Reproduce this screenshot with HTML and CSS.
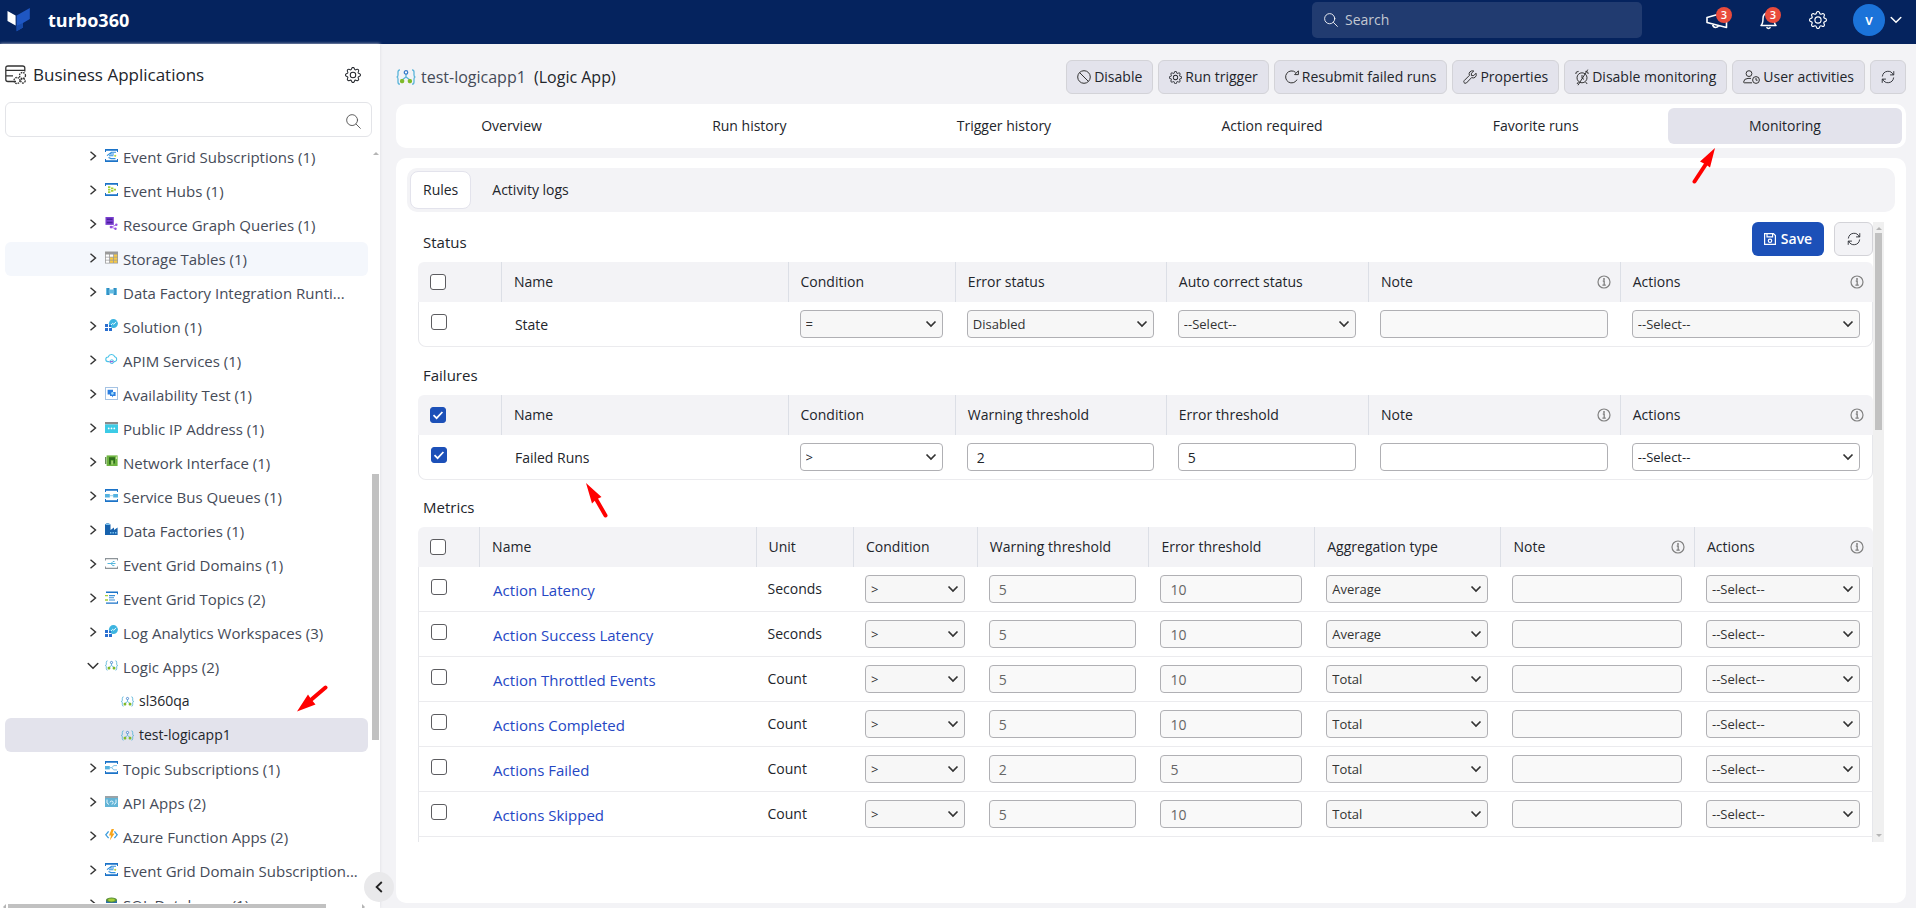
FILE: index.html
```html
<!DOCTYPE html>
<html lang="en">
<head>
<meta charset="utf-8">
<title>turbo360 - Business Applications</title>
<link rel="stylesheet" href="styles.css">
</head>
<body>
<svg class="sprite" aria-hidden="true">
  <symbol id="gear" viewBox="0 0 16 16"><path fill="currentColor" d="M8 4.754a3.246 3.246 0 1 0 0 6.492 3.246 3.246 0 0 0 0-6.492M5.754 8a2.246 2.246 0 1 1 4.492 0 2.246 2.246 0 0 1-4.492 0"/><path fill="currentColor" d="M9.796 1.343c-.527-1.79-3.065-1.79-3.592 0l-.094.319a.873.873 0 0 1-1.255.52l-.292-.16c-1.64-.892-3.433.902-2.54 2.541l.159.292a.873.873 0 0 1-.52 1.255l-.319.094c-1.79.527-1.79 3.065 0 3.592l.319.094a.873.873 0 0 1 .52 1.255l-.16.292c-.892 1.64.901 3.434 2.541 2.54l.292-.159a.873.873 0 0 1 1.255.52l.094.319c.527 1.79 3.065 1.79 3.592 0l.094-.319a.873.873 0 0 1 1.255-.52l.292.16c1.64.893 3.434-.902 2.54-2.541l-.159-.292a.873.873 0 0 1 .52-1.255l.319-.094c1.79-.527 1.79-3.065 0-3.592l-.319-.094a.873.873 0 0 1-.52-1.255l.16-.292c.893-1.64-.902-3.433-2.541-2.54l-.292.159a.873.873 0 0 1-1.255-.52zm-2.633.283c.246-.835 1.428-.835 1.674 0l.094.319a1.873 1.873 0 0 0 2.693 1.115l.291-.16c.764-.415 1.6.42 1.184 1.185l-.159.292a1.873 1.873 0 0 0 1.116 2.692l.318.094c.835.246.835 1.428 0 1.674l-.319.094a1.873 1.873 0 0 0-1.115 2.693l.16.291c.415.764-.42 1.6-1.185 1.184l-.291-.159a1.873 1.873 0 0 0-2.693 1.116l-.094.318c-.246.835-1.428.835-1.674 0l-.094-.319a1.873 1.873 0 0 0-2.692-1.115l-.292.16c-.764.415-1.6-.42-1.184-1.185l.159-.291A1.873 1.873 0 0 0 1.945 8.93l-.319-.094c-.835-.246-.835-1.428 0-1.674l.319-.094A1.873 1.873 0 0 0 3.06 4.377l-.16-.292c-.415-.764.42-1.6 1.185-1.184l.292.159a1.873 1.873 0 0 0 2.692-1.115z"/></symbol>
  <symbol id="search" viewBox="0 0 16 16"><g fill="none" stroke="currentColor" stroke-linecap="round"><circle cx="6.5" cy="6.5" r="5.8"/><path d="M10.8 10.8 15.3 15.3"/></g></symbol>
  <symbol id="refresh" viewBox="0 0 16 16"><g fill="none" stroke="currentColor" stroke-linecap="round" stroke-linejoin="round"><path d="M1.6 7A6.5 6.5 0 0 1 14 5.4M14.4 9A6.5 6.5 0 0 1 2 10.6"/><path d="M14.6 1.8V5.6H10.8M1.4 14.2V10.4H5.2"/></g></symbol>
  <symbol id="right" viewBox="0 0 8 10"><path fill="none" stroke="currentColor" stroke-width="1.4" d="M1.5.8 6.5 5 1.5 9.2"/></symbol>
  <symbol id="down" viewBox="0 0 12 8"><path fill="none" stroke="currentColor" stroke-width="1.5" stroke-linecap="round" d="M1.2 1.5 6 6.3 10.8 1.5"/></symbol>
  <symbol id="info" viewBox="0 0 14 14"><circle cx="7" cy="7" r="6" fill="none" stroke="#808080" stroke-width="1.2"/><path d="M5.8 6H7.2V10M5.4 10.1H8.8" fill="none" stroke="#808080" stroke-width="1.3"/><circle cx="7" cy="3.9" r="1" fill="#808080"/></symbol>
  <symbol id="logic" viewBox="0 0 20 16"><g fill="none" stroke="#59b4d9" stroke-width="1.3"><path d="M4 .8Q2 .8 2 3V6Q2 8 .6 8 2 8 2 10V13Q2 15.2 4 15.2M16 .8Q18 .8 18 3V6Q18 8 19.4 8 18 8 18 10V13Q18 15.2 16 15.2M10 5V8L6 11M10 8 14 11"/></g><circle cx="10" cy="3.4" r="1.7" fill="#fff" stroke="#3a7cc9" stroke-width="1.3"/><rect x="4" y="10" width="4.2" height="4.2" rx="1.6" fill="#7fba2a"/><rect x="11.8" y="10" width="4.2" height="4.2" rx="1.6" fill="#7fba2a"/></symbol>
  <symbol id="egs" viewBox="0 0 13 13"><path fill="#1b73c8" d="M0 0H13V3H12V1.8H1V3H0ZM0 13H13V10H12V11.2H1V10H0Z"/><path fill="none" stroke="#2f8fdd" stroke-width="1.1" d="M2 6.6 6.5 3.2H11M4 6.7H8.5M3.5 8.5 6 9.6H10.5M5 5H9"/><circle cx="10.2" cy="6.8" r="1.1" fill="#b6d948"/></symbol>
  <symbol id="hub" viewBox="0 0 13 13"><path fill="#1b73c8" d="M0 0H13V3H12V1.8H1V3H0ZM0 13H13V10H12V11.2H1V10H0Z"/><path fill="#a4d037" d="M3 3.2H5.4V5H3ZM3 5.7H5.4V7.5H3ZM3 8.2H5.4V10H3ZM6 4.4H8.4V6.2H6ZM6 7H8.4V8.8H6ZM8.8 5.7H11V7.5H8.8Z"/></symbol>
  <symbol id="graph" viewBox="0 0 13 14"><path fill="#7a3fd0" d="M0 0H9V8.5H0Z"/><path fill="#4c1f9c" d="M1.4 1.5H7.6V3.2H1.4ZM1.4 5H7.6V6.7H1.4Z"/><path stroke="#a66ae8" fill="none" d="M6 11 11.5 8.5M6 11 10.5 12.5"/><g fill="#9550e0"><circle cx="6" cy="10.8" r="1.5"/><circle cx="11.7" cy="8.3" r="1.3"/><circle cx="10.8" cy="12.6" r="1.3"/></g></symbol>
  <symbol id="table" viewBox="0 0 13 12"><path fill="#9a9a9a" d="M0 0H13V12H0Z"/><path fill="#fff" d="M.8 3H4.2V5.2H.8ZM.8 6H4.2V8.2H.8ZM.8 9H4.2V11.2H.8ZM5 3H8.2V5.2H5Z"/><path fill="#f6c945" d="M5 6H8.2V8.2H5ZM5 9H8.2V11.2H5ZM9 3H12.2V5.2H9ZM9 6H12.2V8.2H9ZM9 9H12.2V11.2H9Z"/></symbol>
  <symbol id="runtime" viewBox="0 0 13 13"><path fill="#2b88bd" d="M1 3H4.5V10H1ZM8.5 3H12V10H8.5Z"/><path fill="#65bde3" d="M3.6 4.5H9.4V8.6H3.6ZM1 3H2.2V10H1ZM10.8 3H12V10H10.8Z"/></symbol>
  <symbol id="solution" viewBox="0 0 13 13"><path fill="#2a6fd0" d="M0 5H3V8H0ZM0 9H3V12H0ZM4 9H7V12H4Z"/><circle cx="8.4" cy="4.6" r="4.5" fill="#3cb4e0"/><path fill="none" stroke="#e6f8ff" stroke-width="1" d="M5.5 6.5 7.6 4.3 8.9 5.3 11 2.8"/><path fill="#2a6fd0" d="M4 6H6V8H4Z"/></symbol>
  <symbol id="cloud" viewBox="0 0 13 13"><path fill="none" stroke="#49c3e8" stroke-width="1.1" d="M4 8.6H3A2.3 2.3 0 0 1 3.2 4 3.5 3.5 0 0 1 9.8 3.8 2.5 2.5 0 0 1 10 8.6H9"/><circle cx="6.8" cy="8.7" r="1.9" fill="none" stroke="#49c3e8"/><path stroke="#8a54d6" stroke-width="1.2" d="M4.6 8.7H8"/></symbol>
  <symbol id="avail" viewBox="0 0 13 13"><path fill="none" stroke="#4b86c8" stroke-dasharray="1 1" d="M.5.5H12.5V12.5H.5Z"/><path fill="#2d7fe0" d="M2.6 2.8H8V7.5H2.6ZM5 5H10.6V9H8.2L7 10.6V9H5Z"/><circle cx="7.4" cy="6.4" r="1.3" fill="#9fe0ff"/></symbol>
  <symbol id="ip" viewBox="0 0 13 13"><path fill="#8b8b8b" d="M0 1H13V3.4H0Z"/><path fill="#3ccbe6" d="M0 3.4H13V12H0Z"/><g fill="#fff"><circle cx="3.7" cy="7.4" r=".9"/><circle cx="6.5" cy="7.4" r=".9"/><circle cx="9.3" cy="7.4" r=".9"/></g></symbol>
  <symbol id="nic" viewBox="0 0 13 13"><path fill="#6a8f5a" d="M0 2H1.4V9H0Z"/><path fill="#6db33f" d="M1.6.4H12.6V11H1.6Z"/><path fill="#2f6e1e" d="M4 2.2H10V8.6H8.4V5H5.8V9.4H4Z"/><path fill="#c7e59b" d="M10.8 1.6H12V4H10.8ZM6.6 6H7.6V9.6H6.6Z"/></symbol>
  <symbol id="queue" viewBox="0 0 13 13"><path fill="#1b73c8" d="M0 0H13V3H12V1.8H1V3H0ZM0 13H13V10H12V11.2H1V10H0Z"/><path fill="#55b2e0" d="M0 5H4.8V8.4H0ZM8.2 5H13V8.4H8.2Z"/><path stroke="#9bd0ea" d="M5 6.7H8"/></symbol>
  <symbol id="factory" viewBox="0 0 13 13"><path fill="#1762ad" d="M0 1.5Q2.5-.8 5.5 1.5V7L9 4.4V7L12.6 4.4V12H0Z"/><path fill="#7cc4ef" d="M.6 1.2Q2.6-.3 5 1.2L5 2H.6ZM5 9H6.4V10.4H5ZM7.5 9H8.9V10.4H7.5ZM10 9H11.4V10.4H10Z"/></symbol>
  <symbol id="domain" viewBox="0 0 13 13"><path fill="#8d9499" d="M0 1H13V3.6H12V2.2H1V3.6H0ZM0 12H13V9.4H12V10.8H1V9.4H0Z"/><path fill="none" stroke="#55b6dc" stroke-width="1" d="M2.5 6.5H6L8 4.5H9.5M6 6.5H10.5M6 6.5 7.6 8.6H9.4"/></symbol>
  <symbol id="topic" viewBox="0 0 13 13"><path fill="#1b73c8" d="M1 .6H13V3.2H12V2H1ZM1 12.8H13V10.2H12V11.4H1Z"/><path stroke="#3a8fd8" stroke-width="1.1" d="M4 4.6H10M4 6.8H9M4 9H10"/><path stroke="#a4d037" stroke-width="1.3" d="M0 4.6H3M0 9H3"/></symbol>
  <symbol id="subs" viewBox="0 0 13 13"><path fill="#1b73c8" d="M0 0H13V3H12V1.8H1V3H0ZM0 13H13V10H12V11.2H1V10H0Z"/><path fill="#55b2e0" d="M0 5H4.8V8.4H0Z"/><path fill="none" stroke="#7fc3e6" d="M4.8 6.7H7L8.6 4.6H12M7 6.7 8.6 8.9H12"/></symbol>
  <symbol id="api" viewBox="0 0 13 13"><path fill="#9aa3a8" d="M0 1H13V3H0Z"/><path fill="#62b4d6" d="M0 3H13V12H0Z"/><path fill="none" stroke="#e6f7ff" stroke-width="1" d="M2 4.5V8L4 9.5M11 4.5V8L9 9.5M5 7.4A1.6 1.6 0 1 1 6.6 9.2"/></symbol>
  <symbol id="func" viewBox="0 0 13 13"><path fill="none" stroke="#3a9bdc" stroke-width="1.3" d="M3.6 2.4.8 5.8 3.6 9.2M9.4 2.4 12.2 5.8 9.4 9.2"/><path fill="#f8a51b" d="M6.6 0H9L7.4 4.4H9.6L4.8 11.4 6.1 6.5H4Z"/></symbol>
  <symbol id="sql" viewBox="0 0 13 13"><path fill="#2a6fb0" d="M1 3H12V13H1Z"/><ellipse cx="6.5" cy="3" rx="5.5" ry="2.6" fill="#5a8f3c"/><ellipse cx="6.5" cy="3" rx="3.4" ry="1.4" fill="#a4d037"/></symbol>
</svg>

<header class="topbar">
  <a class="brand" href="#">
    <svg width="23" height="24" viewBox="0 0 23 24" aria-hidden="true"><path fill="#fff" d="M.5 3 8.6 7.5V17.5L.5 13Z"/><path fill="#1f57c3" d="M9.6 7.6 22.8 0V11L16 15V19.5L9.6 23.3Z"/><path fill="#174aa8" d="M9.6 17.8 16 15V19.5L9.6 23.3Z"/></svg>
    <span>turbo360</span>
  </a>
  <label class="topsearch"><svg width="14" height="14" aria-hidden="true"><use href="#search"/></svg><input type="text" placeholder="Search" aria-label="Search"></label>
  <div class="tools">
    <button class="tool" aria-label="Announcements"><svg width="22" height="18" viewBox="0 0 22 18" aria-hidden="true"><path fill="none" stroke="#fff" stroke-width="1.6" stroke-linejoin="round" d="M1 6.5 20.5 1V16.5L1 11.5ZM6.5 13.2Q7 16.5 9.6 16.5 12 16.5 12.6 14.6"/></svg><span class="badge">3</span></button>
    <button class="tool" aria-label="Notifications"><svg width="17" height="20" viewBox="0 0 17 20" aria-hidden="true"><path fill="none" stroke="#fff" stroke-width="1.5" stroke-linejoin="round" d="M1 15.5Q3 13.5 3 8.5 3 3.2 8.5 2.5 14 3.2 14 8.5 14 13.5 16 15.5ZM8.5 2.5V.8M6.5 17.2Q8.5 19.6 10.5 17.2"/></svg><span class="badge">3</span></button>
    <button class="tool" aria-label="Settings"><svg width="18" height="18" aria-hidden="true"><use href="#gear"/></svg></button>
    <button class="account" aria-label="Account"><span class="avatar">v</span><svg width="12" height="8" aria-hidden="true"><use href="#down"/></svg></button>
  </div>
</header>

<div class="shell">
  <aside class="sidebar">
    <div class="side-head">
      <svg width="22" height="20" viewBox="0 0 22 20" fill="none" stroke="#333" stroke-width="1.3" aria-hidden="true"><path d="M11 16.5H3Q.8 16.5.8 14.5V3Q.8 1 3 1H17.5Q19.8 1 19.8 3V6.5M1 5.4H19.8M1 10.8H8"/><circle cx="17.5" cy="10.5" r="3" stroke-dasharray="1.6 .8"/><circle cx="12" cy="15.5" r="3" stroke-dasharray="1.6 .8"/><circle cx="18" cy="15.8" r="2.2" stroke-dasharray="1.6 .8"/></svg>
      <h1>Business Applications</h1>
      <button class="plain" aria-label="Application settings"><svg width="16" height="16" aria-hidden="true"><use href="#gear"/></svg></button>
    </div>
    <label class="side-search"><input type="text" aria-label="Filter applications"><svg width="15" height="15" aria-hidden="true"><use href="#search"/></svg></label>
    <div class="tree-wrap">
      <ul class="tree">
        <li><svg class="tw"><use href="#right"/></svg><svg class="ti"><use href="#egs"/></svg>Event Grid Subscriptions (1)</li>
        <li><svg class="tw"><use href="#right"/></svg><svg class="ti"><use href="#hub"/></svg>Event Hubs (1)</li>
        <li><svg class="tw"><use href="#right"/></svg><svg class="ti"><use href="#graph"/></svg>Resource Graph Queries (1)</li>
        <li class="hover"><svg class="tw"><use href="#right"/></svg><svg class="ti"><use href="#table"/></svg>Storage Tables (1)</li>
        <li><svg class="tw"><use href="#right"/></svg><svg class="ti"><use href="#runtime"/></svg>Data Factory Integration Runti...</li>
        <li><svg class="tw"><use href="#right"/></svg><svg class="ti"><use href="#solution"/></svg>Solution (1)</li>
        <li><svg class="tw"><use href="#right"/></svg><svg class="ti"><use href="#cloud"/></svg>APIM Services (1)</li>
        <li><svg class="tw"><use href="#right"/></svg><svg class="ti"><use href="#avail"/></svg>Availability Test (1)</li>
        <li><svg class="tw"><use href="#right"/></svg><svg class="ti"><use href="#ip"/></svg>Public IP Address (1)</li>
        <li><svg class="tw"><use href="#right"/></svg><svg class="ti"><use href="#nic"/></svg>Network Interface (1)</li>
        <li><svg class="tw"><use href="#right"/></svg><svg class="ti"><use href="#queue"/></svg>Service Bus Queues (1)</li>
        <li><svg class="tw"><use href="#right"/></svg><svg class="ti"><use href="#factory"/></svg>Data Factories (1)</li>
        <li><svg class="tw"><use href="#right"/></svg><svg class="ti"><use href="#domain"/></svg>Event Grid Domains (1)</li>
        <li><svg class="tw"><use href="#right"/></svg><svg class="ti"><use href="#topic"/></svg>Event Grid Topics (2)</li>
        <li><svg class="tw"><use href="#right"/></svg><svg class="ti"><use href="#solution"/></svg>Log Analytics Workspaces (3)</li>
        <li><svg class="tw"><use href="#down"/></svg><svg class="ti"><use href="#logic"/></svg>Logic Apps (2)</li>
        <li class="leaf"><svg class="ti"><use href="#logic"/></svg>sl360qa</li>
        <li class="leaf active"><svg class="ti"><use href="#logic"/></svg>test-logicapp1</li>
        <li><svg class="tw"><use href="#right"/></svg><svg class="ti"><use href="#subs"/></svg>Topic Subscriptions (1)</li>
        <li><svg class="tw"><use href="#right"/></svg><svg class="ti"><use href="#api"/></svg>API Apps (2)</li>
        <li><svg class="tw"><use href="#right"/></svg><svg class="ti"><use href="#func"/></svg>Azure Function Apps (2)</li>
        <li><svg class="tw"><use href="#right"/></svg><svg class="ti"><use href="#egs"/></svg>Event Grid Domain Subscription...</li>
        <li><svg class="tw"><use href="#right"/></svg><svg class="ti"><use href="#sql"/></svg>SQL Databases (1)</li>
      </ul>
      <div class="vbar side-vbar"><span class="up"></span><span class="thumb"></span></div>
    </div>
    <div class="hbar"><span class="left"></span><span class="thumb"></span><span class="right"></span></div>
    <button class="collapse" aria-label="Collapse sidebar"><svg width="8" height="12" viewBox="0 0 8 12" aria-hidden="true"><path fill="none" stroke="#222" stroke-width="1.8" d="M6.8 1 1.6 6 6.8 11"/></svg></button>
  </aside>

  <main class="main">
    <div class="title-row">
      <svg width="20" height="16" aria-hidden="true"><use href="#logic"/></svg>
      <h2>test-logicapp1 <span>(Logic App)</span></h2>
      <div class="actions">
        <button class="btn"><svg width="14" height="14" viewBox="0 0 14 14" fill="none" stroke="#333" aria-hidden="true"><circle cx="7" cy="7" r="6.3"/><path d="M2.6 2.6 11.4 11.4"/></svg>Disable</button>
        <button class="btn"><svg width="13" height="13" aria-hidden="true"><use href="#gear"/></svg>Run trigger</button>
        <button class="btn"><svg width="14" height="14" viewBox="0 0 14 14" fill="none" stroke="#333" aria-hidden="true"><path d="M12 9.6A6 6 0 1 1 10.6 2.4M13.4.8V4.6H9.6Z"/></svg>Resubmit failed runs</button>
        <button class="btn"><svg width="14" height="14" viewBox="0 0 14 14" fill="none" stroke="#333" stroke-linejoin="round" aria-hidden="true"><path d="M10.8 1 8.4 3.2V5.6H10.8L13 3.2Q14 6 12 7.4 10.4 8.4 8.6 7.6L3.4 13Q1.6 13.8 1 12.6.4 11.4 1.2 10.6L6.4 5.4Q5.6 3.4 6.8 2 8.4.2 10.8 1Z"/></svg>Properties</button>
        <button class="btn"><svg width="14" height="17" viewBox="0 0 14 17" fill="none" stroke="#333" aria-hidden="true"><circle cx="7" cy="8.8" r="5"/><path d="M7 6V9L9 10.4M.8 5Q.4 2.4 3.6 2.4M13.2 5Q13.6 2.4 10.4 2.4M3.4 13 2 15M10.6 13 12.2 15M12.8.6 3 16.2"/></svg>Disable monitoring</button>
        <button class="btn"><svg width="17" height="14" viewBox="0 0 17 14" fill="none" stroke="#333" aria-hidden="true"><circle cx="6" cy="3.6" r="2.9"/><path d="M9 12.8H1.4Q.6 12.8.6 12 .8 8.6 5 8.4H8"/><circle cx="13" cy="10" r="3.4"/><path d="M13 8V10.2H14.6"/></svg>User activities</button>
        <button class="btn square" aria-label="Refresh"><svg width="14" height="14" aria-hidden="true"><use href="#refresh"/></svg></button>
      </div>
    </div>

    <nav class="tabs">
      <a href="#">Overview</a><a href="#">Run history</a><a href="#">Trigger history</a><a href="#">Action required</a><a href="#">Favorite runs</a><a href="#" class="on">Monitoring</a>
    </nav>

    <section class="card">
      <div class="subtabs"><button class="on">Rules</button><button>Activity logs</button></div>
      <div class="scroll">
        <div class="rules">
          <div class="rules-head">
            <h3>Status</h3>
            <button class="save"><svg width="12" height="12" viewBox="0 0 12 12" fill="none" stroke="#fff" stroke-width="1.2" aria-hidden="true"><path d="M.6.6H9.4L11.4 2.6V11.4H.6ZM3 .8V3.8H8.6V.8"/><circle cx="6" cy="7.8" r="1.7"/></svg>Save</button>
            <button class="reload" aria-label="Reload rules"><svg width="14" height="14" aria-hidden="true"><use href="#refresh"/></svg></button>
          </div>
          <table class="grid">
            <colgroup><col class="a1"><col class="a2"><col class="a3"><col class="a4"><col class="a5"><col class="a6"><col class="a7"></colgroup>
            <thead><tr><th><input type="checkbox" aria-label="Select all status rules"></th><th>Name</th><th>Condition</th><th>Error status</th><th>Auto correct status</th><th><div class="th">Note<svg class="inf"><use href="#info"/></svg></div></th><th><div class="th">Actions<svg class="inf"><use href="#info"/></svg></div></th></tr></thead>
            <tbody><tr><td><input type="checkbox" aria-label="State rule"></td><td>State</td><td><select disabled aria-label="Condition"><option>=</option></select></td><td><select disabled aria-label="Error status"><option>Disabled</option></select></td><td><select disabled aria-label="Auto correct status"><option>--Select--</option></select></td><td><input type="text" disabled aria-label="Note"></td><td><select disabled aria-label="Actions"><option>--Select--</option></select></td></tr></tbody>
          </table>
          <h3 class="sec">Failures</h3>
          <table class="grid">
            <colgroup><col class="a1"><col class="a2"><col class="a3"><col class="a4"><col class="a5"><col class="a6"><col class="a7"></colgroup>
            <thead><tr><th><input type="checkbox" checked aria-label="Select all failure rules"></th><th>Name</th><th>Condition</th><th>Warning threshold</th><th>Error threshold</th><th><div class="th">Note<svg class="inf"><use href="#info"/></svg></div></th><th><div class="th">Actions<svg class="inf"><use href="#info"/></svg></div></th></tr></thead>
            <tbody><tr><td><input type="checkbox" checked aria-label="Failed Runs rule"></td><td>Failed Runs</td><td><select aria-label="Condition"><option>&gt;</option></select></td><td><input type="text" value="2" aria-label="Warning threshold"></td><td><input type="text" value="5" aria-label="Error threshold"></td><td><input type="text" aria-label="Note"></td><td><select aria-label="Actions"><option>--Select--</option></select></td></tr></tbody>
          </table>
          <h3 class="sec">Metrics</h3>
          <table class="grid">
            <colgroup><col class="m1"><col class="m2"><col class="m3"><col class="m4"><col class="m5"><col class="m6"><col class="m7"><col class="m8"><col class="m9"></colgroup>
            <thead><tr><th><input type="checkbox" aria-label="Select all metric rules"></th><th>Name</th><th>Unit</th><th>Condition</th><th>Warning threshold</th><th>Error threshold</th><th>Aggregation type</th><th><div class="th">Note<svg class="inf"><use href="#info"/></svg></div></th><th><div class="th">Actions<svg class="inf"><use href="#info"/></svg></div></th></tr></thead>
            <tbody>
              <tr><td><input type="checkbox" aria-label="Action Latency rule"></td><td><a href="#">Action Latency</a></td><td>Seconds</td><td><select disabled aria-label="Condition"><option>&gt;</option></select></td><td><input type="text" disabled value="5" aria-label="Warning threshold"></td><td><input type="text" disabled value="10" aria-label="Error threshold"></td><td><select disabled aria-label="Aggregation type"><option>Average</option></select></td><td><input type="text" disabled aria-label="Note"></td><td><select disabled aria-label="Actions"><option>--Select--</option></select></td></tr>
              <tr><td><input type="checkbox" aria-label="Action Success Latency rule"></td><td><a href="#">Action Success Latency</a></td><td>Seconds</td><td><select disabled aria-label="Condition"><option>&gt;</option></select></td><td><input type="text" disabled value="5" aria-label="Warning threshold"></td><td><input type="text" disabled value="10" aria-label="Error threshold"></td><td><select disabled aria-label="Aggregation type"><option>Average</option></select></td><td><input type="text" disabled aria-label="Note"></td><td><select disabled aria-label="Actions"><option>--Select--</option></select></td></tr>
              <tr><td><input type="checkbox" aria-label="Action Throttled Events rule"></td><td><a href="#">Action Throttled Events</a></td><td>Count</td><td><select disabled aria-label="Condition"><option>&gt;</option></select></td><td><input type="text" disabled value="5" aria-label="Warning threshold"></td><td><input type="text" disabled value="10" aria-label="Error threshold"></td><td><select disabled aria-label="Aggregation type"><option>Total</option></select></td><td><input type="text" disabled aria-label="Note"></td><td><select disabled aria-label="Actions"><option>--Select--</option></select></td></tr>
              <tr><td><input type="checkbox" aria-label="Actions Completed rule"></td><td><a href="#">Actions Completed</a></td><td>Count</td><td><select disabled aria-label="Condition"><option>&gt;</option></select></td><td><input type="text" disabled value="5" aria-label="Warning threshold"></td><td><input type="text" disabled value="10" aria-label="Error threshold"></td><td><select disabled aria-label="Aggregation type"><option>Total</option></select></td><td><input type="text" disabled aria-label="Note"></td><td><select disabled aria-label="Actions"><option>--Select--</option></select></td></tr>
              <tr><td><input type="checkbox" aria-label="Actions Failed rule"></td><td><a href="#">Actions Failed</a></td><td>Count</td><td><select disabled aria-label="Condition"><option>&gt;</option></select></td><td><input type="text" disabled value="2" aria-label="Warning threshold"></td><td><input type="text" disabled value="5" aria-label="Error threshold"></td><td><select disabled aria-label="Aggregation type"><option>Total</option></select></td><td><input type="text" disabled aria-label="Note"></td><td><select disabled aria-label="Actions"><option>--Select--</option></select></td></tr>
              <tr><td><input type="checkbox" aria-label="Actions Skipped rule"></td><td><a href="#">Actions Skipped</a></td><td>Count</td><td><select disabled aria-label="Condition"><option>&gt;</option></select></td><td><input type="text" disabled value="5" aria-label="Warning threshold"></td><td><input type="text" disabled value="10" aria-label="Error threshold"></td><td><select disabled aria-label="Aggregation type"><option>Total</option></select></td><td><input type="text" disabled aria-label="Note"></td><td><select disabled aria-label="Actions"><option>--Select--</option></select></td></tr>
              <tr class="rest"><td colspan="9"></td></tr>
            </tbody>
          </table>
        </div>
        <div class="vbar main-vbar"><span class="up"></span><span class="thumb"></span><span class="dn"></span></div>
      </div>
    </section>
  </main>
</div>

<svg class="arrow arrow-tab" width="24" height="36" viewBox="0 0 24 36" aria-hidden="true"><path stroke="#f00" stroke-width="4" stroke-linecap="round" d="M2.5 33.5 14 16"/><path fill="#f00" d="M23 0 18 19.5 14 16.5 8 13.5Z"/></svg>
<svg class="arrow arrow-row" width="24" height="36" viewBox="0 0 24 36" aria-hidden="true"><path stroke="#f00" stroke-width="4" stroke-linecap="round" d="M19.5 32.5 10 16"/><path fill="#f00" d="M0 0 15.5 14 10 16.5 6 20.5Z"/></svg>
<svg class="arrow arrow-tree" width="32" height="28" viewBox="0 0 32 28" aria-hidden="true"><path stroke="#f00" stroke-width="4" stroke-linecap="round" d="M28.5 2.5 15 14"/><path fill="#f00" d="M0 26.5 11 9.5 14 14 18.5 19.5Z"/></svg>
</body>
</html>
```
FILE: styles.css
```css
* { box-sizing: border-box; }
body {
  margin: 0;
  height: 100vh;
  display: flex;
  flex-direction: column;
  overflow: hidden;
  position: relative;
  background: #f3f3f6;
  color: #22252b;
  font: 14px/20px "Open Sans", sans-serif;
}
button, input, select { font: inherit; color: inherit; margin: 0; }
button { border: 0; background: none; padding: 0; display: inline-flex; align-items: center; justify-content: center; }
a { text-decoration: none; color: inherit; }
h1, h2, h3 { margin: 0; font-weight: 400; }
svg { flex: none; display: block; }
.sprite { position: absolute; width: 0; height: 0; }

/* top bar */
.topbar { height: 44px; flex: none; display: flex; align-items: flex-start; background: #05235e; color: #fff; padding: 0 14px 0 7px; }
.brand { display: flex; align-items: center; gap: 18px; height: 40px; font: 700 18px/24px "Open Sans", sans-serif; }
.topsearch { margin: 2px 64px 0 auto; width: 330px; height: 36px; border-radius: 5px; background: #213b70; display: flex; align-items: center; gap: 7px; padding: 0 12px; }
.topsearch input { flex: 1; min-width: 0; border: 0; outline: 0; background: none; padding: 0; color: #fff; }
.topsearch input::placeholder { color: #c3c8d2; opacity: 1; }
.tools { display: flex; align-items: center; height: 40px; gap: 32px; }
.tool { position: relative; height: 38px; }
.badge { position: absolute; top: 6px; right: -4px; width: 16px; height: 16px; border-radius: 50%; background: #e94b3c; font-size: 11px; line-height: 16px; font-weight: 600; }
.account { gap: 5px; margin-left: -6px; }
.avatar { width: 32px; height: 32px; border-radius: 50%; background: #1b73d9; line-height: 32px; font-weight: 600; }

.shell { flex: 1; min-height: 0; display: flex; }

/* sidebar */
.sidebar { position: relative; flex: none; width: 380px; display: flex; flex-direction: column; background: #fff; box-shadow: 0 0 3px #dcdce2; padding-top: 16px; }
.side-head { display: flex; align-items: center; gap: 6px; padding: 0 19px 0 5px; height: 30px; }
.side-head h1 { flex: 1; font-size: 17px; line-height: 24px; }
.side-search { margin: 12px 8px 3px 5px; height: 35px; flex: none; border: 1px solid #e3e4e8; border-radius: 6px; display: flex; align-items: center; padding: 4px 10px 0; color: #555; }
.side-search input { flex: 1; min-width: 0; border: 0; outline: 0; background: none; }
.tree-wrap { flex: 1; min-height: 0; display: flex; }
.tree { list-style: none; margin: 0; padding: 0 3px 0 5px; flex: 1; min-width: 0; overflow: hidden; color: #454b58; font-size: 15px; }
.tree li { display: flex; align-items: center; height: 34px; padding-left: 82px; border-radius: 6px; white-space: nowrap; }
.tree .hover { background: #f4f7fc; }
.tree .active { background: #e3e3ec; }
.tree .leaf { padding-left: 116px; color: #22252b; font-size: 14px; }
.tw { width: 12px; height: 10px; margin: 0 6px 3px 0; color: #333; }
.ti { width: 13px; height: 13px; margin: 0 5px 3px 0; }
.leaf .ti { margin-bottom: 0; }
.vbar { display: flex; flex-direction: column; align-items: center; flex: none; }
.side-vbar { width: 9px; }
.vbar .thumb { width: 7px; background: #c1c1c1; }
.side-vbar .thumb { margin-top: 319px; height: 266px; }
.up, .dn { border: 3px solid transparent; width: 0; height: 0; }
.up { border-bottom-color: #b5b5b5; border-top-width: 0; }
.side-vbar .up { margin-top: 12px; }
.dn { border-top-color: #b5b5b5; border-bottom-width: 0; margin: auto 0 5px; }
.hbar { height: 4px; margin-top: 1px; display: flex; flex: none; padding: 0 15px 0 0; }
.hbar .thumb { width: 318px; background: #c1c1c1; }
.hbar .left, .hbar .right { border: 3px solid transparent; height: 0; }
.hbar .left { border-right-color: #b5b5b5; margin-right: 2px; }
.hbar .right { border-left-color: #b5b5b5; margin-left: auto; border-right-width: 0; }
.collapse { position: absolute; right: -14px; bottom: 6px; width: 30px; height: 30px; border-radius: 50%; background: #e9e9eb; z-index: 2; }

/* main column */
.main { flex: 1; min-width: 0; display: flex; flex-direction: column; padding: 16px 10px 5px 16px; }
.title-row { display: flex; align-items: center; gap: 5px; height: 34px; }
.title-row h2 { font-size: 16px; line-height: 20px; color: #454b58; white-space: nowrap; }
.title-row h2 span { color: #22252b; margin-left: 4px; }
.actions { margin-left: auto; display: flex; gap: 5px; }
.btn { height: 34px; padding: 0 10px; gap: 3px; border: 1px solid #d3d3d8; border-radius: 6px; background: #e3e3ec; white-space: nowrap; }
.tabs { margin-top: 10px; display: flex; gap: 8px; padding: 4px; background: #fff; border-radius: 10px; }
.tabs a { flex: 1 1 auto; height: 36px; line-height: 36px; text-align: center; border-radius: 6px; }
.tabs .on { background: #e3e3ec; }
.card { margin-top: 10px; flex: 1; min-height: 0; display: flex; flex-direction: column; background: #fff; border-radius: 10px; padding: 10px 11px 61px; }
.subtabs { display: flex; gap: 8px; padding: 3px; background: #f3f3f6; border-radius: 10px; flex: none; }
.subtabs button { height: 38px; padding: 0 12px; border: 1px solid transparent; border-radius: 8px; }
.subtabs .on { background: #fff; border-color: #e3e3ec; }
.scroll { margin: 10px 11px 0; flex: 1; min-height: 0; display: flex; }
.rules { flex: 1; min-width: 0; overflow: hidden; }
.main-vbar { width: 11px; background: #f0f0f0; padding-top: 5px; }
.main-vbar .thumb { margin-top: 3px; height: 197px; }
.rules-head { display: flex; align-items: flex-start; height: 40px; }
.rules h3 { padding-left: 5px; font-size: 15px; line-height: 40px; }
.rules .sec { padding-top: 8px; }
.rules .sec:last-of-type { padding-top: 7px; }
.rules-head h3 { flex: 1; }
.save { width: 72px; height: 34px; gap: 5px; border-radius: 6px; background: #1c50b8; color: #fff; font-weight: 600; margin-right: 10px; }
.reload { width: 39px; height: 34px; border: 1px solid #d3d3d8; border-radius: 6px; background: #f3f3f6; }

/* rule tables */
.grid { width: 100%; table-layout: fixed; border-collapse: separate; border-spacing: 0; }
.grid th { height: 40px; padding: 0 12px; background: #f3f3f6; text-align: left; font-weight: 400; font-size: 14px; white-space: nowrap; border-left: 1px solid #dcdfe6; }
.grid th:first-child { border-left: 0; border-top-left-radius: 6px; }
.grid th:last-child { border-top-right-radius: 6px; }
.grid td { height: 45px; padding: 0 12px; border-bottom: 1px solid #ebebee; }
.grid td:first-child { padding-bottom: 4px; border-left: 1px solid #e6e7eb; }
.grid td:last-child { border-right: 1px solid #e6e7eb; }
.grid td:nth-child(2) { padding-left: 14px; padding-top: 2px; }
.grid tr:last-child td:first-child { border-bottom-left-radius: 8px; }
.grid tr:last-child td:last-child { border-bottom-right-radius: 8px; }
.grid td a { color: #2547c4; font-size: 15px; }
.th { display: flex; align-items: center; justify-content: space-between; }
.inf { width: 14px; height: 14px; margin-right: -3px; }
.a1 { width: 5.7%; } .a2 { width: 19.7%; } .a3 { width: 11.5%; } .a4 { width: 14.5%; } .a5 { width: 13.9%; } .a6 { width: 17.3%; } .a7 { width: 17.4%; }
.m1 { width: 4.2%; } .m2 { width: 19%; } .m3 { width: 6.7%; } .m4 { width: 8.5%; } .m5 { width: 11.8%; } .m6 { width: 11.4%; } .m7 { width: 12.8%; } .m8 { width: 13.3%; } .m9 { width: 12.3%; }
.grid select, .grid input[type="text"] { display: block; width: 100%; height: 28px; border: 1px solid #b0b0b4; border-radius: 4px; background-color: #fff; opacity: 1; }
.grid select { appearance: none; padding: 0 24px 0 5px; font-size: 13px; background-repeat: no-repeat; background-position: right 5px center; background-image: url("data:image/svg+xml,%3Csvg xmlns='http://www.w3.org/2000/svg' width='12' height='8'%3E%3Cpath d='M1.5 1.5 6 6 10.5 1.5' fill='none' stroke='%23333' stroke-width='1.7'/%3E%3C/svg%3E"); }
.grid input[type="text"] { padding: 0 9px; }
.grid select:disabled { background-color: #f7f7f7; color: #333; }
.grid input[type="text"]:disabled { background-color: #f9f9f9; color: #666; }
.grid input[type="checkbox"] { appearance: none; display: block; width: 16px; height: 16px; border: 1px solid #5c5c60; border-radius: 3px; background: #fff; }
.grid input[type="checkbox"]:checked { border-color: #1c50b8; background: #1c50b8 url("data:image/svg+xml,%3Csvg xmlns='http://www.w3.org/2000/svg' width='14' height='14'%3E%3Cpath d='M2.5 7.2 5.6 10.2 11.4 4' fill='none' stroke='white' stroke-width='1.7'/%3E%3C/svg%3E") center no-repeat; }

/* annotation arrows */
.arrow { position: absolute; }
.arrow-tab { left: 1692px; top: 148px; }
.arrow-row { left: 586px; top: 483px; }
.arrow-tree { left: 297px; top: 685px; }
```
